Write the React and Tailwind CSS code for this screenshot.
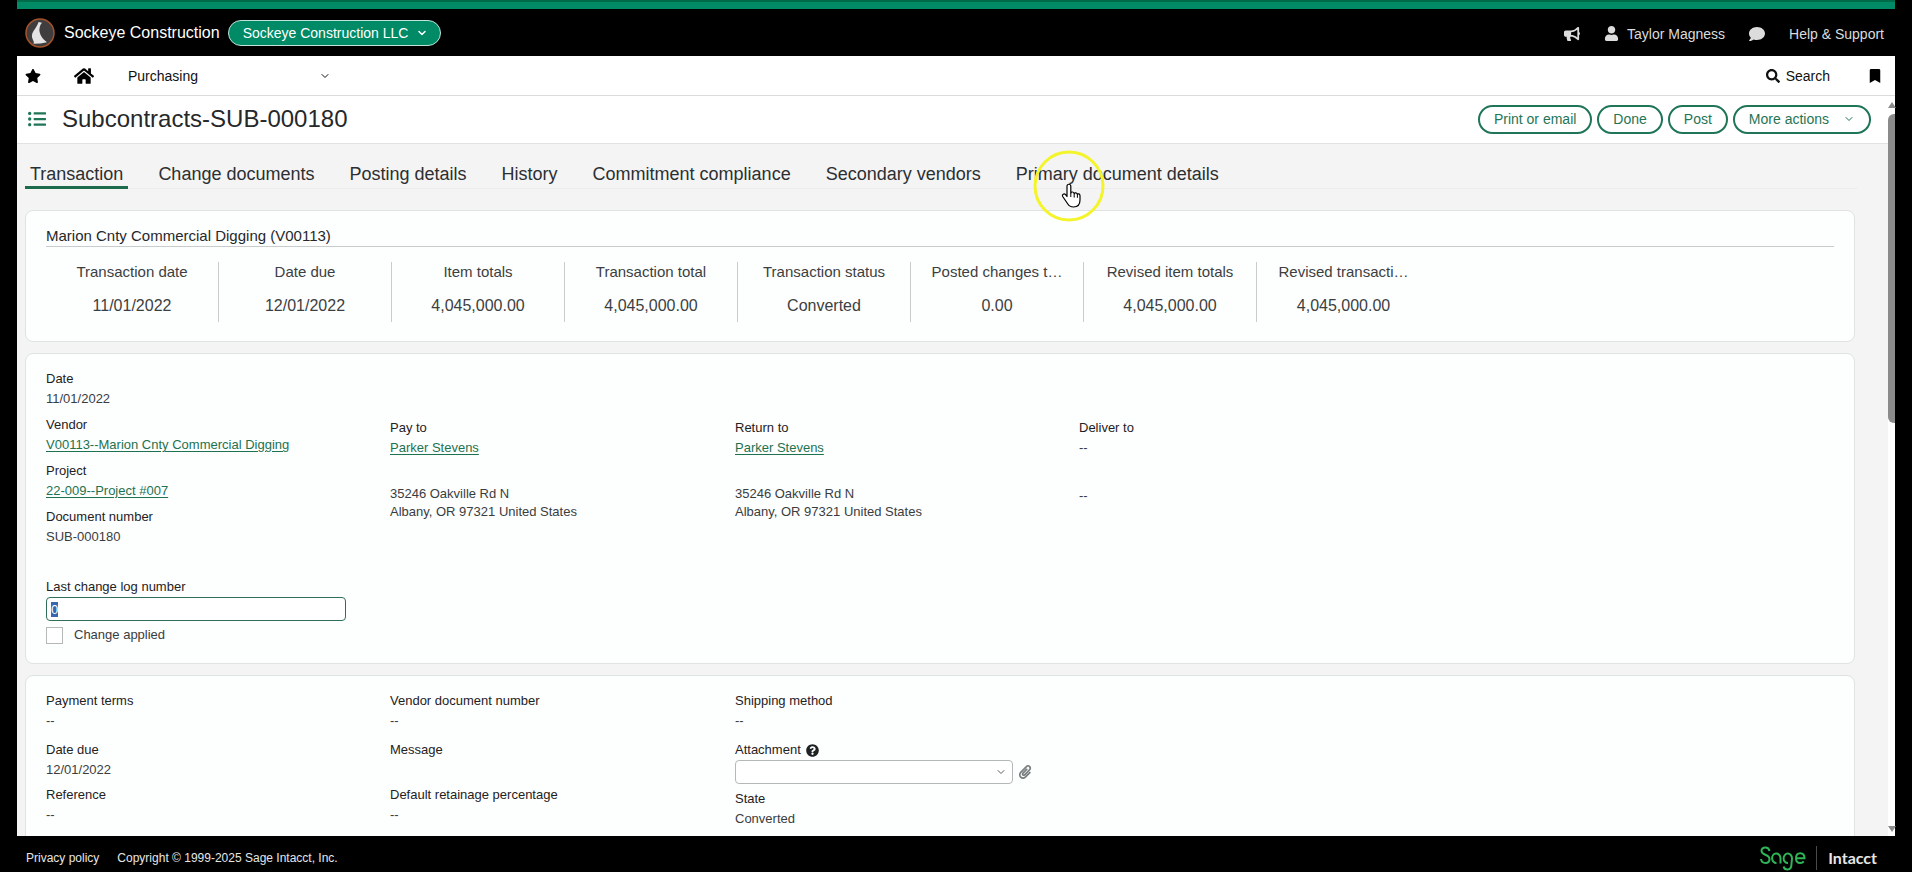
import React, { useEffect, useRef, useState } from 'react';
import {
  FaBookmark,
  FaBullhorn,
  FaComment,
  FaHome,
  FaListUl,
  FaPaperclip,
  FaQuestionCircle,
  FaSearch,
  FaStar,
  FaUser,
} from 'react-icons/fa';
import { ChevronDown } from 'lucide-react';

const tabs = [
  'Transaction',
  'Change documents',
  'Posting details',
  'History',
  'Commitment compliance',
  'Secondary vendors',
  'Primary document details',
];

const summary = [
  { label: 'Transaction date', value: '11/01/2022' },
  { label: 'Date due', value: '12/01/2022' },
  { label: 'Item totals', value: '4,045,000.00' },
  { label: 'Transaction total', value: '4,045,000.00' },
  { label: 'Transaction status', value: 'Converted' },
  { label: 'Posted changes t…', value: '0.00' },
  { label: 'Revised item totals', value: '4,045,000.00' },
  { label: 'Revised transacti…', value: '4,045,000.00' },
];

const contacts = [
  { label: 'Pay to', name: 'Parker Stevens', address: ['35246 Oakville Rd N', 'Albany, OR 97321 United States'] },
  { label: 'Return to', name: 'Parker Stevens', address: ['35246 Oakville Rd N', 'Albany, OR 97321 United States'] },
];

const CompanyLogo = () => (
  <svg viewBox="0 0 30 30" className="size-[30px]" aria-hidden="true">
    <circle cx="15" cy="15" r="14" fill="#3f3d3e" stroke="#a4532c" strokeWidth="1.5" />
    <path
      d="M13.500 4l3.500.8-1.500 2c-1.200 3.500-1.400 5-.8 7.500.7 3 2.500 5.500 4.300 7.500l3 2.500-6.500 1.200-7 .3c.5-1.500.3-2.500-.5-3.800C6.500 19 6.500 16 8.500 13c2-3 3.500-5 4.500-7.500z"
      fill="#e4e4e4"
    />
  </svg>
);

const SageLogo = () => (
  <svg viewBox="0 0 46 25" className="h-[25px] w-[46px]" fill="none" stroke="#2fb457" strokeWidth="2" role="img" aria-label="Sage">
    <path d="M9.500 5C9 2.500 7.500 1.500 5.500 1.500 3 1.500 1.500 3 1.500 5c0 4.500 8 3 8 8 0 2.500-1.600 4-4 4S1.300 15.500 1 13" />
    <path d="M20.500 17.500V12A4.200 4.700 0 1 0 16.500 17" />
    <path d="M28 17a4.200 4.700 0 1 1 4-4.700c0 2.500-.5 3-.5 5.500 0 3.800-1.600 5.700-4 5.700-2 0-3.500-1.200-3.800-3" />
    <path d="M36 12.200h8.500c0-3-1.700-5-4.200-5s-4.300 2-4.300 5 1.800 4.800 4.300 4.800c1.500 0 2.700-.6 3.400-1.600" />
  </svg>
);

// Hand pointer with the yellow highlight ring around it
const Pointer = () => (
  <svg viewBox="0 0 76 76" className="pointer-events-none absolute top-[148px] left-[1031px] size-[76px]" aria-hidden="true">
    <circle cx="38" cy="38" r="34" fill="none" stroke="#f4f42a" strokeWidth="3" />
    <path
      d="M36 38.200c0-2.600 3.800-2.600 3.800 0V45c.4-1.500 3-1.300 3.400.6.6-1.300 2.800-1 3.200.7.8-1 2.600-.5 2.600 1.400V52c0 4.500-2.500 7-6.500 7-3 0-4.800-1.400-6-3.500l-4.800-7c-1-1.800 1.300-3.500 2.900-1.800l1.400 1.800z"
      fill="#fff"
      stroke="#000"
      strokeWidth="1.200"
      strokeLinejoin="round"
    />
    <path d="M39.800 45v4M43.200 45.600v4M46.400 46.300v3.500" stroke="#000" fill="none" />
  </svg>
);

const Card = ({ className = '', children }) => (
  <section className={`rounded-lg border border-[#dfe3e3] bg-[#fdfefe] px-5 ${className}`}>{children}</section>
);

const Field = ({ label, children }) => (
  <div>
    <div className="text-[13px] leading-5 text-[#1f2223]">{label}</div>
    <div className="text-[13px] leading-5 text-[#3a3d3e]">{children}</div>
  </div>
);

const FieldColumn = ({ children }) => (
  <div className="flex flex-col gap-[5px] [&>*:first-child]:mb-1">{children}</div>
);

const GreenLink = ({ children }) => (
  <a href="#" className="text-[#1d7250] underline underline-offset-2">
    {children}
  </a>
);

const PillButton = ({ children }) => (
  <button type="button" className="flex h-[29px] items-center rounded-full border-2 border-[#1f7556] px-[14px] text-sm text-[#1f7556]">
    {children}
  </button>
);

const App = () => {
  const [logNumber, setLogNumber] = useState('0');
  const [changeApplied, setChangeApplied] = useState(false);
  const logInput = useRef(null);

  // The log number starts focused with its value selected
  useEffect(() => {
    logInput.current.focus();
    logInput.current.select();
  }, []);

  return (
    <div className="relative flex h-screen flex-col overflow-hidden bg-black px-[17px] font-['Liberation_Sans',Arial,sans-serif]">
      <div className="h-[9px] shrink-0 border-t-2 border-[#006b48] bg-[#008a66]" />

      <header className="flex h-[47px] shrink-0 items-center pt-px pr-[11px] pl-2 text-white">
        <CompanyLogo />
        <span className="ml-[9px] text-base">Sockeye Construction</span>
        <button type="button" className="ml-2 flex h-[26px] items-center gap-2 rounded-full border border-[#bfe3d8] bg-[#008a66] pr-3 pl-[14px] text-sm">
          Sockeye Construction LLC
          <ChevronDown className="size-3" strokeWidth={3} />
        </button>
        <div className="ml-auto flex items-center pt-px text-sm text-[#dcdcdc]">
          <FaBullhorn className="size-4" />
          <FaUser className="ml-6 size-[15px]" />
          <span className="ml-2">Taylor Magness</span>
          <FaComment className="ml-6 size-4" />
          <a href="#" className="ml-6">Help &amp; Support</a>
        </div>
      </header>

      <nav className="flex h-10 shrink-0 items-center border-b border-[#dcdcdc] bg-white pr-[13px] pl-2 text-sm text-[#0f1111]">
        <FaStar className="size-4 text-black" />
        <FaHome className="ml-[33px] size-5 text-black" />
        <button type="button" className="ml-[34px] flex w-[203px] items-center justify-between">
          Purchasing
          <ChevronDown className="size-3" />
        </button>
        <button type="button" className="ml-auto flex items-center gap-[6px]">
          <FaSearch className="size-[14px]" />
          Search
        </button>
        <FaBookmark className="ml-[38px] size-[14px] text-black" />
      </nav>

      <div className="flex min-h-0 flex-1 bg-white">
        <main className="min-w-0 flex-1 overflow-hidden bg-[#f4f4f5]">
          <div className="flex h-12 items-center border-b border-[#e2e2e2] bg-white pr-[17px] pb-px pl-[11px]">
            <FaListUl className="size-[18px] text-[#1f7556]" />
            <h1 className="ml-4 text-2xl text-[#26282a]">Subcontracts-SUB-000180</h1>
            <div className="ml-auto flex gap-[5px]">
              <PillButton>Print or email</PillButton>
              <PillButton>Done</PillButton>
              <PillButton>Post</PillButton>
              <PillButton>
                More actions
                <ChevronDown className="ml-[14px] size-3" />
              </PillButton>
            </div>
          </div>

          <div className="mr-[30px] ml-2 flex gap-[25px] border-b border-[#ebedef] pt-[14px]">
            {tabs.map((tab, i) => (
              <button
                key={tab}
                type="button"
                className={`-mb-px h-[31px] border-b-3 px-[5px] pt-[2px] text-lg leading-7 text-[#2c2f31] ${i === 0 ? 'border-[#1b6b4c]' : 'border-transparent'}`}
              >
                {tab}
              </button>
            ))}
          </div>

          <div className="mt-[21px] mr-[33px] ml-2 flex flex-col gap-[11px]">
            <Card className="h-[132px] pt-[15px]">
              <h2 className="border-b border-[#c9cccc] text-[15px] leading-5 text-[#26282a]">Marion Cnty Commercial Digging (V00113)</h2>
              <dl className="mt-[15px] flex">
                {summary.map((item) => (
                  <div key={item.label} className="h-15 w-[173px] border-r border-[#c9cccc] px-2 text-center text-[#3c3f41] last:border-r-0">
                    <dt className="text-[15px] leading-5">{item.label}</dt>
                    <dd className="mt-3 text-base leading-6">{item.value}</dd>
                  </div>
                ))}
              </dl>
            </Card>

            <Card className="h-[311px] pt-[15px]">
              <div className="grid grid-cols-[344px_345px_344px_1fr]">
                <div className="flex flex-col gap-[6px]">
                  <Field label="Date">11/01/2022</Field>
                  <Field label="Vendor">
                    <GreenLink>V00113--Marion Cnty Commercial Digging</GreenLink>
                  </Field>
                  <Field label="Project">
                    <GreenLink>22-009--Project #007</GreenLink>
                  </Field>
                  <Field label="Document number">SUB-000180</Field>
                </div>
                {contacts.map((contact) => (
                  <div key={contact.label} className="pt-[49px]">
                    <Field label={contact.label}>
                      <GreenLink>{contact.name}</GreenLink>
                    </Field>
                    <address className="mt-[27px] text-[13px] leading-[18px] text-[#3a3d3e] not-italic">
                      {contact.address.map((line) => (
                        <div key={line}>{line}</div>
                      ))}
                    </address>
                  </div>
                ))}
                <div className="pt-[49px]">
                  <Field label="Deliver to">--</Field>
                  <div className="mt-[29px] text-[13px] leading-[18px] text-[#3a3d3e]">--</div>
                </div>
              </div>

              <div className="mt-[30px] w-[300px]">
                <label htmlFor="log-number" className="block text-[13px] leading-5 text-[#1f2223]">
                  Last change log number
                </label>
                <input
                  id="log-number"
                  ref={logInput}
                  type="text"
                  value={logNumber}
                  onChange={(e) => setLogNumber(e.target.value)}
                  className="block h-6 w-full rounded-sm border border-[#2f6f59] bg-white px-1 text-[13px] outline-none selection:bg-[#3a66b0] selection:text-white"
                />
                <label className="mt-1 flex items-center gap-[11px] text-[13px] leading-5 text-[#3a3d3e]">
                  <input
                    type="checkbox"
                    checked={changeApplied}
                    onChange={(e) => setChangeApplied(e.target.checked)}
                    className="size-[17px] appearance-none border border-[#b5b8b8] bg-white checked:bg-[#1f7556]"
                  />
                  Change applied
                </label>
              </div>
            </Card>

            <Card className="h-[311px] pt-[15px]">
              <div className="grid grid-cols-[344px_345px_344px_1fr]">
                <FieldColumn>
                  <Field label="Payment terms">--</Field>
                  <Field label="Date due">12/01/2022</Field>
                  <Field label="Reference">--</Field>
                </FieldColumn>
                <FieldColumn>
                  <Field label="Vendor document number">--</Field>
                  <Field label="Message">&nbsp;</Field>
                  <Field label="Default retainage percentage">--</Field>
                </FieldColumn>
                <FieldColumn>
                  <Field label="Shipping method">--</Field>
                  <div>
                    <label htmlFor="attachment" className="flex items-center gap-[5px] text-[13px] leading-5 text-[#1f2223]">
                      Attachment
                      <FaQuestionCircle className="size-[13px]" />
                    </label>
                    <div className="flex items-center gap-[5px]">
                      <div className="relative w-[278px]">
                        <select id="attachment" className="block h-6 w-full appearance-none rounded-sm border border-[#b5b8b8] bg-white px-[5px] text-[13px]">
                          <option></option>
                        </select>
                        <ChevronDown className="pointer-events-none absolute top-[6px] right-[6px] size-3 text-[#5c5f60]" />
                      </div>
                      <FaPaperclip className="size-[14px] text-[#7c7f80]" />
                    </div>
                  </div>
                  <Field label="State">Converted</Field>
                </FieldColumn>
              </div>
            </Card>
          </div>
        </main>

        {/* Scrollbar */}
        <div className="flex w-[7px] shrink-0 flex-col items-center">
          <div className="mt-[6px] border-x-4 border-b-6 border-x-transparent border-b-[#8b8b8b]" />
          <div className="mt-[6px] h-[309px] w-full rounded-l-md bg-[#8b8b8b]" />
          <div className="mt-auto mb-1 border-x-4 border-t-6 border-x-transparent border-t-[#8b8b8b]" />
        </div>
      </div>

      <footer className="flex h-9 shrink-0 items-center pt-2 pr-[18px] pl-[9px] text-xs text-[#e6e6e6]">
        <a href="#">Privacy policy</a>
        <span className="ml-[18px]">Copyright © 1999-2025 Sage Intacct, Inc.</span>
        <div className="ml-auto flex items-center">
          <SageLogo />
          <span className="ml-[10px] h-6 border-l border-[#4a4a4a]" />
          <span className="ml-[11px] font-['Lato',sans-serif] text-base font-bold">Intacct</span>
        </div>
      </footer>

      <Pointer />
    </div>
  );
};

export default App;
